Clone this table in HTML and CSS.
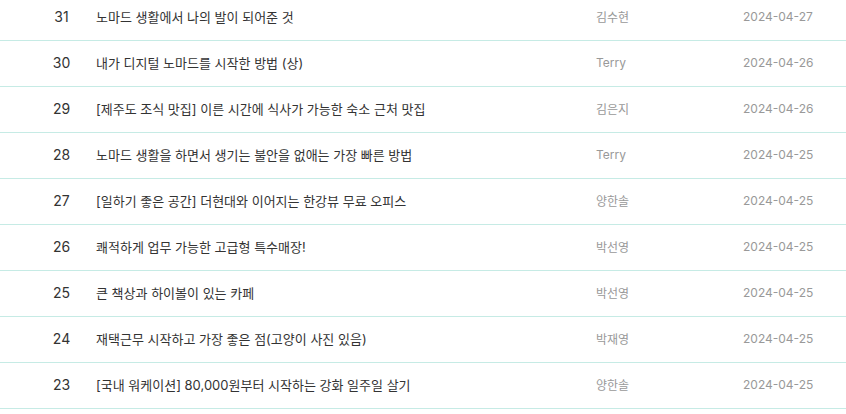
FILE: index.html
```html
<!DOCTYPE html>
<html lang="ko">
<head>
<meta charset="utf-8">
<link rel="stylesheet" href="styles.css">
</head>
<body>
<div class="list">
  <div class="row"><span class="num">31</span><span class="title">노마드 생활에서 나의 발이 되어준 것</span><span class="author">김수현</span><span class="date">2024-04-27</span></div>
  <div class="row"><span class="num">30</span><span class="title">내가 디지털 노마드를 시작한 방법 (상)</span><span class="author">Terry</span><span class="date">2024-04-26</span></div>
  <div class="row"><span class="num">29</span><span class="title">[제주도 조식 맛집] 이른 시간에 식사가 가능한 숙소 근처 맛집</span><span class="author">김은지</span><span class="date">2024-04-26</span></div>
  <div class="row"><span class="num">28</span><span class="title">노마드 생활을 하면서 생기는 불안을 없애는 가장 빠른 방법</span><span class="author">Terry</span><span class="date">2024-04-25</span></div>
  <div class="row"><span class="num">27</span><span class="title">[일하기 좋은 공간] 더현대와 이어지는 한강뷰 무료 오피스</span><span class="author">양한솔</span><span class="date">2024-04-25</span></div>
  <div class="row"><span class="num">26</span><span class="title">쾌적하게 업무 가능한 고급형 특수매장!</span><span class="author">박선영</span><span class="date">2024-04-25</span></div>
  <div class="row"><span class="num">25</span><span class="title">큰 책상과 하이볼이 있는 카페</span><span class="author">박선영</span><span class="date">2024-04-25</span></div>
  <div class="row"><span class="num">24</span><span class="title">재택근무 시작하고 가장 좋은 점(고양이 사진 있음)</span><span class="author">박재영</span><span class="date">2024-04-25</span></div>
  <div class="row"><span class="num">23</span><span class="title">[국내 워케이션] 80,000원부터 시작하는 강화 일주일 살기</span><span class="author">양한솔</span><span class="date">2024-04-25</span></div>
</div>
</body>
</html>
```

FILE: styles.css
```css
html, body {
  margin: 0;
  padding: 0;
  background: #fff;
}
body {
  font-family: Inter, "Noto Sans CJK KR", sans-serif;
  color: #333;
}
.list {
  margin-top: -5px;
}
.row {
  display: grid;
  grid-template-columns: 96px 500px 147px 1fr;
  align-items: center;
  box-sizing: content-box;
  height: 43px;
  padding-bottom: 2px;
  border-bottom: 1px solid #c6ebe5;
}
.num {
  font-size: 14px;
  padding-left: 27px;
  text-align: center;
  color: #333;
}
.title {
  font-size: 13px;
  color: #333;
  white-space: nowrap;
}
.author {
  font-size: 12px;
  color: #999;
}
.date {
  font-size: 12px;
  color: #999;
}
```
